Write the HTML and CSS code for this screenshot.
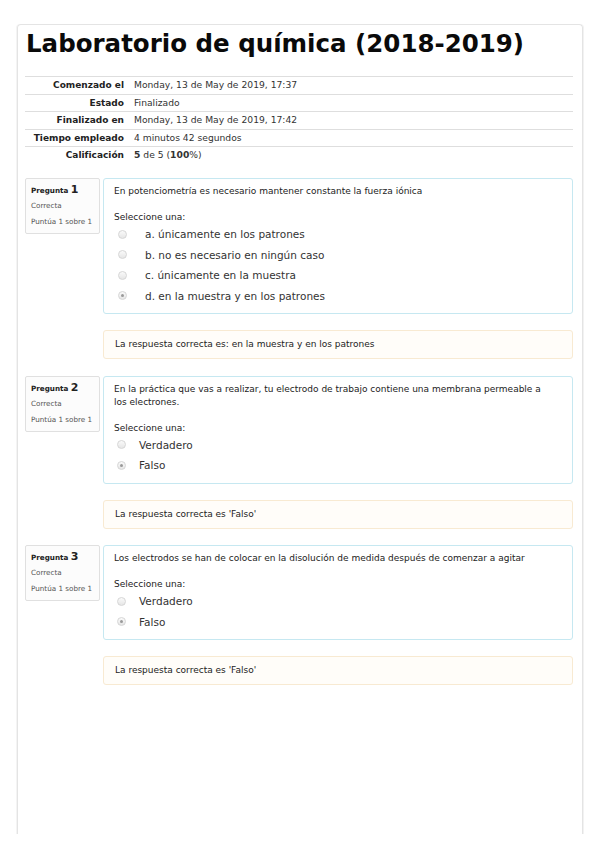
FILE: index.html
```html
<!DOCTYPE html>
<html lang="es">
<head>
<meta charset="utf-8">
<title>Laboratorio de química (2018-2019)</title>
<link rel="stylesheet" href="styles.css">
</head>
<body>
<div class="card">
  <h1 class="title">Laboratorio de química (2018-2019)</h1>
  <div class="summary">
    <div class="row"><div class="lbl">Comenzado el</div><div class="val">Monday, 13 de May de 2019, 17:37</div></div>
    <div class="row"><div class="lbl">Estado</div><div class="val">Finalizado</div></div>
    <div class="row"><div class="lbl">Finalizado en</div><div class="val">Monday, 13 de May de 2019, 17:42</div></div>
    <div class="row"><div class="lbl">Tiempo empleado</div><div class="val">4 minutos 42 segundos</div></div>
    <div class="row last"><div class="lbl">Calificación</div><div class="val"><b>5</b> de 5 (<b>100</b>%)</div></div>
  </div>

  <div class="que">
    <div class="info">
      <div class="qno">Pregunta <span class="num">1</span></div>
      <div class="state">Correcta</div>
      <div class="grade">Puntúa 1 sobre 1</div>
    </div>
    <div class="content">
      <div class="formulation">
        <div class="qtext">En potenciometría es necesario mantener constante la fuerza iónica</div>
        <div class="prompt">Seleccione una:</div>
        <div class="answer lettered">
          <div class="opt"><span class="radio"></span><span class="otext">a. únicamente en los patrones</span></div>
          <div class="opt"><span class="radio"></span><span class="otext">b. no es necesario en ningún caso</span></div>
          <div class="opt"><span class="radio"></span><span class="otext">c. únicamente en la muestra</span></div>
          <div class="opt"><span class="radio checked"></span><span class="otext">d. en la muestra y en los patrones</span></div>
        </div>
      </div>
      <div class="outcome">La respuesta correcta es: en la muestra y en los patrones</div>
    </div>
  </div>

  <div class="que">
    <div class="info">
      <div class="qno">Pregunta <span class="num">2</span></div>
      <div class="state">Correcta</div>
      <div class="grade">Puntúa 1 sobre 1</div>
    </div>
    <div class="content">
      <div class="formulation">
        <div class="qtext">En la práctica que vas a realizar, tu electrodo de trabajo contiene una membrana permeable a los electrones.</div>
        <div class="prompt">Seleccione una:</div>
        <div class="answer">
          <div class="opt"><span class="radio"></span><span class="otext">Verdadero</span></div>
          <div class="opt"><span class="radio checked"></span><span class="otext">Falso</span></div>
        </div>
      </div>
      <div class="outcome">La respuesta correcta es 'Falso'</div>
    </div>
  </div>

  <div class="que">
    <div class="info">
      <div class="qno">Pregunta <span class="num">3</span></div>
      <div class="state">Correcta</div>
      <div class="grade">Puntúa 1 sobre 1</div>
    </div>
    <div class="content">
      <div class="formulation">
        <div class="qtext">Los electrodos se han de colocar en la disolución de medida después de comenzar a agitar</div>
        <div class="prompt">Seleccione una:</div>
        <div class="answer">
          <div class="opt"><span class="radio"></span><span class="otext">Verdadero</span></div>
          <div class="opt"><span class="radio checked"></span><span class="otext">Falso</span></div>
        </div>
      </div>
      <div class="outcome">La respuesta correcta es 'Falso'</div>
    </div>
  </div>
</div>
</body>
</html>
```

FILE: styles.css
```css
html, body {
  margin: 0;
  padding: 0;
  background: #ffffff;
}
body {
  font-family: "DejaVu Sans", "Liberation Sans", sans-serif;
  color: #222;
}
.card {
  box-sizing: border-box;
  margin: 24px 0 0 17px;
  width: 566px;
  height: 810px;
  border: 1px solid #e4e4e4;
  border-bottom: none;
  border-radius: 4px 4px 0 0;
  box-shadow: 1px 0 0 #f2f2f2, -1px 0 0 #f4f4f4;
  padding: 0 9px 0 7px;
}
.title {
  margin: 0;
  padding: 3px 0 0 1px;
  font-size: 24.5px;
  line-height: 31px;
  font-weight: bold;
  color: #0a0a0a;
}
.summary {
  margin-top: 17px;
  font-size: 9.2px;
  color: #333;
}
.row {
  display: flex;
  border-top: 1px solid #dedede;
}
.lbl {
  width: 99px;
  padding: 2px 3px 2px 0;
  text-align: right;
  font-weight: bold;
  font-size: 9px;
  line-height: 12.5px;
  color: #222;
}
.val {
  padding: 2px 0 2px 7px;
  line-height: 12.5px;
}
.que {
  display: flex;
  align-items: flex-start;
  margin-top: 14.5px;
}
.que + .que {
  margin-top: 16.5px;
}
.info {
  box-sizing: border-box;
  width: 75px;
  height: 56px;
  border: 1px solid #e0e0e0;
  border-radius: 2px;
  background: #fcfcfc;
  padding: 5px 0 0 5px;
  font-size: 7.2px;
  color: #555;
}
.qno {
  font-weight: bold;
  color: #222;
  line-height: 12px;
}
.num {
  font-size: 11px;
}
.state {
  margin-top: 3px;
  line-height: 12px;
}
.grade {
  margin-top: 4px;
  line-height: 12px;
}
.content {
  flex: 1;
  margin-left: 3px;
}
.formulation {
  border: 1px solid #c6e8f1;
  border-radius: 3px;
  background: #ffffff;
  padding: 6px 16px 7px 10px;
  font-size: 9px;
  color: #222;
}
.qtext {
  line-height: 13px;
}
.prompt {
  margin-top: 13px;
  line-height: 13px;
}
.answer {
  font-size: 10.5px;
  color: #333;
}
.opt {
  display: flex;
  align-items: center;
  height: 20.5px;
}
.radio {
  box-sizing: border-box;
  width: 9px;
  height: 9px;
  border-radius: 50%;
  border: 1px solid #d6d6d6;
  background: linear-gradient(#fafafa, #e6e6e6);
  margin-left: 3px;
  margin-right: 13px;
  flex: none;
  display: flex;
  align-items: center;
  justify-content: center;
}
.lettered .radio {
  margin-left: 4px;
  margin-right: 18px;
}
.radio.checked::after {
  content: "";
  width: 3px;
  height: 3px;
  border-radius: 50%;
  background: #9a9a9a;
}
.outcome {
  margin-top: 16px;
  border: 1px solid #f8ead2;
  border-radius: 3px;
  background: #fffdf9;
  padding: 7px 11px;
  font-size: 9px;
  line-height: 13px;
  color: #222;
}
```
